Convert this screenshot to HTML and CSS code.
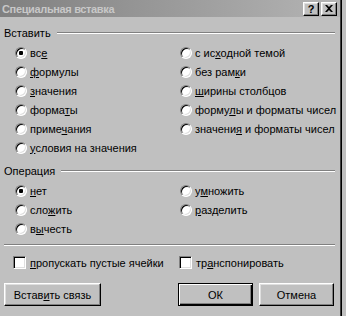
FILE: index.html
```html
<!DOCTYPE html>
<html lang="ru">
<head>
<meta charset="utf-8">
<title>Специальная вставка</title>
<link rel="stylesheet" href="styles.css">
</head>
<body>
<div class="window">
  <div class="titlebar">
    <span class="title">Специальная вставка</span>
    <div class="tbtns">
      <span class="tbtn q">?</span>
      <span class="tbtn x"><svg width="8" height="7" viewBox="0 0 8 7"><path d="M0 0h2l2 2 2-2h2L5 3.5 8 7H6L4 5 2 7H0l3-3.5z" fill="#000"/></svg></span>
    </div>
  </div>
  <div class="body">
    <div class="group-head"><span class="glabel">Вставить</span><span class="etch"></span></div>
    <div class="opts paste">
      <div class="col">
        <label class="opt"><span class="radio on"></span><span>вс<u>е</u></span></label>
        <label class="opt"><span class="radio"></span><span><u>ф</u>ормулы</span></label>
        <label class="opt"><span class="radio"></span><span><u>з</u>начения</span></label>
        <label class="opt"><span class="radio"></span><span>форма<u>т</u>ы</span></label>
        <label class="opt"><span class="radio"></span><span>приме<u>ч</u>ания</span></label>
        <label class="opt"><span class="radio"></span><span><u>у</u>словия на значения</span></label>
      </div>
      <div class="col">
        <label class="opt"><span class="radio"></span><span>с ис<u>х</u>одной темой</span></label>
        <label class="opt"><span class="radio"></span><span>без рам<u>к</u>и</span></label>
        <label class="opt"><span class="radio"></span><span><u>ш</u>ирины столбцов</span></label>
        <label class="opt"><span class="radio"></span><span>форму<u>л</u>ы и форматы чисел</span></label>
        <label class="opt"><span class="radio"></span><span>значени<u>я</u> и форматы чисел</span></label>
      </div>
    </div>
    <div class="group-head op"><span class="glabel">Операция</span><span class="etch"></span></div>
    <div class="opts">
      <div class="col">
        <label class="opt"><span class="radio on"></span><span><u>н</u>ет</span></label>
        <label class="opt"><span class="radio"></span><span>сло<u>ж</u>ить</span></label>
        <label class="opt"><span class="radio"></span><span>в<u>ы</u>честь</span></label>
      </div>
      <div class="col">
        <label class="opt"><span class="radio"></span><span>у<u>м</u>ножить</span></label>
        <label class="opt"><span class="radio"></span><span><u>р</u>азделить</span></label>
      </div>
    </div>
    <div class="sep etch"></div>
    <div class="checks">
      <label class="chk"><span class="box"></span><span><u>п</u>ропускать пустые ячейки</span></label>
      <label class="chk"><span class="box"></span><span>тр<u>а</u>нспонировать</span></label>
    </div>
    <div class="buttons">
      <span class="btn link"><span>Встав<u>и</u>ть связь</span></span>
      <span class="spacer"></span>
      <span class="btn ok">ОК</span>
      <span class="btn cancel">Отмена</span>
    </div>
  </div>
</div>
</body>
</html>
```
FILE: styles.css
```css
html, body {
  margin: 0;
  padding: 0;
  background: #c0c0c0;
}
body {
  width: 346px;
  height: 316px;
  overflow: hidden;
  font-family: "Liberation Sans", Arial, sans-serif;
  font-size: 11px;
  color: #000;
}
.window {
  width: 340px;
  height: 316px;
  border-right: 1px solid #404040;
  box-shadow: 1px 0 0 #000;
  background: #c0c0c0;
  display: flex;
  flex-direction: column;
}
.titlebar {
  height: 17px;
  flex: none;
  background: linear-gradient(to right, #808080, #b4b4b4);
  display: flex;
  align-items: center;
  padding: 0 3px 0 2px;
}
.title {
  font-weight: bold;
  font-size: 11px;
  color: #c8c8c8;
  letter-spacing: -0.35px;
  flex: 1;
}
.tbtns {
  display: flex;
  gap: 2px;
}
.tbtn {
  width: 14px;
  height: 12px;
  background: #c0c0c0;
  border: 1px solid;
  border-color: #fff #000 #000 #fff;
  box-shadow: inset -1px -1px #808080, inset 1px 1px #dfdfdf;
  display: flex;
  align-items: center;
  justify-content: center;
  font-weight: bold;
  font-size: 11px;
  line-height: 12px;
}
.body {
  display: flex;
  flex-direction: column;
  padding: 0 5px 0 4px;
}
.group-head {
  height: 14px;
  margin-top: 9px;
  display: flex;
  align-items: center;
  gap: 6px;
}
.group-head.op {
  margin-top: 7px;
}
.etch {
  display: block;
  height: 0;
  border-top: 1px solid #808080;
  border-bottom: 1px solid #fff;
}
.group-head .etch {
  flex: 1;
}
.opts {
  display: grid;
  grid-template-columns: 165px 1fr;
  padding-left: 11px;
  margin-top: 3px;
}
.col {
  display: flex;
  flex-direction: column;
}
.opt {
  height: 19px;
  display: flex;
  align-items: center;
  gap: 3px;
  white-space: nowrap;
}
u {
  text-decoration: underline;
  text-underline-offset: 1px;
}
.radio {
  width: 10px;
  height: 10px;
  flex: none;
  border-radius: 50%;
  background: #fff;
  border: 1px solid;
  border-color: #808080 #fff #fff #808080;
  box-shadow: inset 1px 1px #000, inset -1px -1px #dfdfdf;
  display: flex;
  align-items: center;
  justify-content: center;
}
.radio.on::after {
  content: "";
  width: 4px;
  height: 4px;
  background: #000;
  border-radius: 1px;
}
.sep {
  margin-top: 6px;
}
.checks {
  display: grid;
  grid-template-columns: 166px 1fr;
  padding-left: 9px;
  margin-top: 9px;
  height: 15px;
}
.chk {
  display: flex;
  align-items: center;
  gap: 4px;
  white-space: nowrap;
}
.box {
  width: 11px;
  height: 11px;
  flex: none;
  background: #fff;
  border: 1px solid;
  border-color: #808080 #fff #fff #808080;
  box-shadow: inset 1px 1px #000, inset -1px -1px #dfdfdf;
}
.buttons {
  display: flex;
  margin-top: 13px;
  padding-right: 1px;
}
.spacer {
  flex: 1;
}
.btn {
  height: 21px;
  display: flex;
  align-items: center;
  justify-content: center;
  background: #c0c0c0;
  border: 1px solid;
  border-color: #fff #000 #000 #fff;
  box-shadow: inset -1px -1px #808080, inset 1px 1px #dfdfdf;
  white-space: nowrap;
}
.btn.link {
  width: 95px;
}
.btn.ok {
  width: 73px;
  border-color: #000;
  box-shadow: inset 1px 1px #fff, inset -1px -1px #000, inset -2px -2px #808080;
}
.btn.cancel {
  width: 73px;
  margin-left: 6px;
}
```
